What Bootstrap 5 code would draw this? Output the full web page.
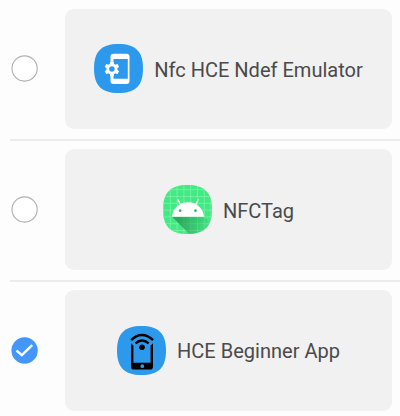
<!DOCTYPE html>
<html lang="en">
<head>
<meta charset="utf-8">
<meta name="viewport" content="width=device-width, initial-scale=1">
<title>Payment apps</title>
<link href="https://cdn.jsdelivr.net/npm/bootstrap@5.3.0/dist/css/bootstrap.min.css" rel="stylesheet">
<style>
body{background:#fdfdfd;font-family:Roboto,"Liberation Sans",sans-serif;color:#4a4a4a;overflow:hidden}
.app-list{padding:8.600px 0 0 10px}
.app-row{height:120.400px;padding-right:8px}
.divider{height:2px;background:#ececec;margin:10px 0 8.450px}
.app-radio{width:29px;height:29px;flex:none;margin-right:26px}
.app-tile{background:#f1f1f1;border-radius:9px;gap:11px}
.app-icon{width:49px;height:49px;flex:none;margin-bottom:.6px}
.app-name{font-size:20.050px;line-height:24px;white-space:nowrap;padding-top:2px}
</style>
<script src="https://cdn.jsdelivr.net/npm/bootstrap@5.3.0/dist/js/bootstrap.bundle.min.js"></script>
</head>
<body>
<svg width="0" height="0" class="position-absolute" aria-hidden="true">
  <defs>
    <path id="squircle" d="M24.500 0C41.500 0 49 7.500 49 24.500S41.500 49 24.500 49 0 41.500 0 24.500 7.500 0 24.500 0Z"/>
    <clipPath id="squircle-clip"><use href="#squircle"/></clipPath>
    <linearGradient id="robot-shade" gradientUnits="userSpaceOnUse" x1="16" y1="34" x2="44" y2="44">
      <stop offset="0" stop-color="#279d55" stop-opacity=".85"/>
      <stop offset="1" stop-color="#279d55" stop-opacity=".12"/>
    </linearGradient>
  </defs>
</svg>
<main class="app-list">
  <div class="app-row d-flex align-items-center">
    <svg class="app-radio" viewBox="0 0 29 29"><circle cx="14.600" cy="14.500" r="12.600" fill="#fff" stroke="#b0b0b0" stroke-width="1.100"/></svg>
    <div class="app-tile d-flex flex-fill h-100 align-items-center justify-content-center">
      <svg class="app-icon" viewBox="0 0 49 49">
        <use href="#squircle" fill="#2c99ec"/>
        <path fill="#fff" fill-rule="evenodd" d="M19.500 9.700h13a3 3 0 0 1 3 3V37a3 3 0 0 1-3 3h-13a3 3 0 0 1-3-3v-5h3v2.700h14.300V15H19.500v2.700h-3v-5a3 3 0 0 1 3-3Z"/>
        <path fill="#fff" transform="translate(8.800 15.900) scale(.76)" d="M19.140 12.940c.04-.3.060-.61.060-.94s-.02-.64-.07-.94l2.030-1.580a.49.490 0 0 0 .12-.61l-1.920-3.320a.49.490 0 0 0-.59-.22l-2.390.960a7 7 0 0 0-1.620-.94L14.400 2.810a.48.480 0 0 0-.48-.41h-3.840a.48.480 0 0 0-.47.410l-.36 2.540a7 7 0 0 0-1.620.94l-2.390-.96a.48.480 0 0 0-.59.220L2.740 8.870a.48.480 0 0 0 .12.610l2.030 1.580a6 6 0 0 0 0 1.880l-2.030 1.580a.49.490 0 0 0-.12.610l1.920 3.320c.12.220.37.290.59.220l2.390-.96c.5.380 1.030.7 1.620.94l.36 2.540c.05.240.24.410.47.410h3.840c.24 0 .44-.17.480-.41l.36-2.540a7 7 0 0 0 1.620-.94l2.390.960c.22.080.47 0 .59-.22l1.920-3.320a.48.480 0 0 0-.12-.61ZM12 15.600a3.600 3.600 0 1 1 0-7.200 3.600 3.600 0 0 1 0 7.200Z"/>
      </svg>
      <span class="app-name">Nfc HCE Ndef Emulator</span>
    </div>
  </div>
  <div class="divider"></div>
  <div class="app-row d-flex align-items-center">
    <svg class="app-radio" viewBox="0 0 29 29"><circle cx="14.600" cy="14.500" r="12.600" fill="#fff" stroke="#b0b0b0" stroke-width="1.100"/></svg>
    <div class="app-tile d-flex flex-fill h-100 align-items-center justify-content-center">
      <svg class="app-icon" viewBox="0 0 49 49">
        <g clip-path="url(#squircle-clip)">
          <path fill="#42ea83" d="M0 0h49v49H0z"/>
          <path stroke="#8df3b4" stroke-width=".6" d="M.5 0v49M7.300 0v49M14.100 0v49M20.900 0v49M27.700 0v49M34.500 0v49M41.300 0v49M48.100 0v49M0 4.700h49M0 11.500h49M0 18.300h49M0 25.100h49M0 31.900h49M0 38.700h49M0 45.500h49"/>
          <path fill="url(#robot-shade)" d="M9 31.700h32l8 8V49H26.300Z"/>
        </g>
        <path fill="#fff" d="M9 31.700C9.600 23.500 16.300 17.300 25 17.300s15.400 6.200 16 14.400Z"/>
        <path stroke="#fff" stroke-width="1.300" stroke-linecap="round" d="m17.600 20-2.500-5.300M32.600 20l2.600-5.300"/>
        <g fill="#2fb868"><circle cx="17.200" cy="25.700" r="1.350"/><circle cx="32.500" cy="25.700" r="1.350"/></g>
      </svg>
      <span class="app-name">NFCTag</span>
    </div>
  </div>
  <div class="divider"></div>
  <div class="app-row d-flex align-items-center">
    <svg class="app-radio" viewBox="0 0 29 29"><circle cx="14.600" cy="14.500" r="13.200" fill="#4596fa"/><path d="m6.500 14.500 5.300 4.700L22.200 9.200" fill="none" stroke="#fff" stroke-width="2.400"/></svg>
    <div class="app-tile d-flex flex-fill h-100 align-items-center justify-content-center">
      <svg class="app-icon" viewBox="0 0 49 49">
        <use href="#squircle" fill="#2c99ec"/>
        <path fill-rule="evenodd" d="m14 17.200 2.400 2.300v17.200h17.200V19.500l2.400-2.300v23.600a2.800 2.800 0 0 1-2.800 2.800H16.800a2.800 2.800 0 0 1-2.800-2.800ZM25.300 38.300a1.900 1.900 0 1 0 0 3.800 1.900 1.900 0 0 0 0-3.800Z"/>
        <circle cx="25" cy="21.300" r="2.800"/>
        <path fill="none" stroke="#000" stroke-width="2.500" d="M14.200 14.200Q19 9 25 9t11 5.200M18.500 17.400q3-3 6.500-3t6.700 3"/>
      </svg>
      <span class="app-name">HCE Beginner App</span>
    </div>
  </div>
</main>
</body>
</html>
